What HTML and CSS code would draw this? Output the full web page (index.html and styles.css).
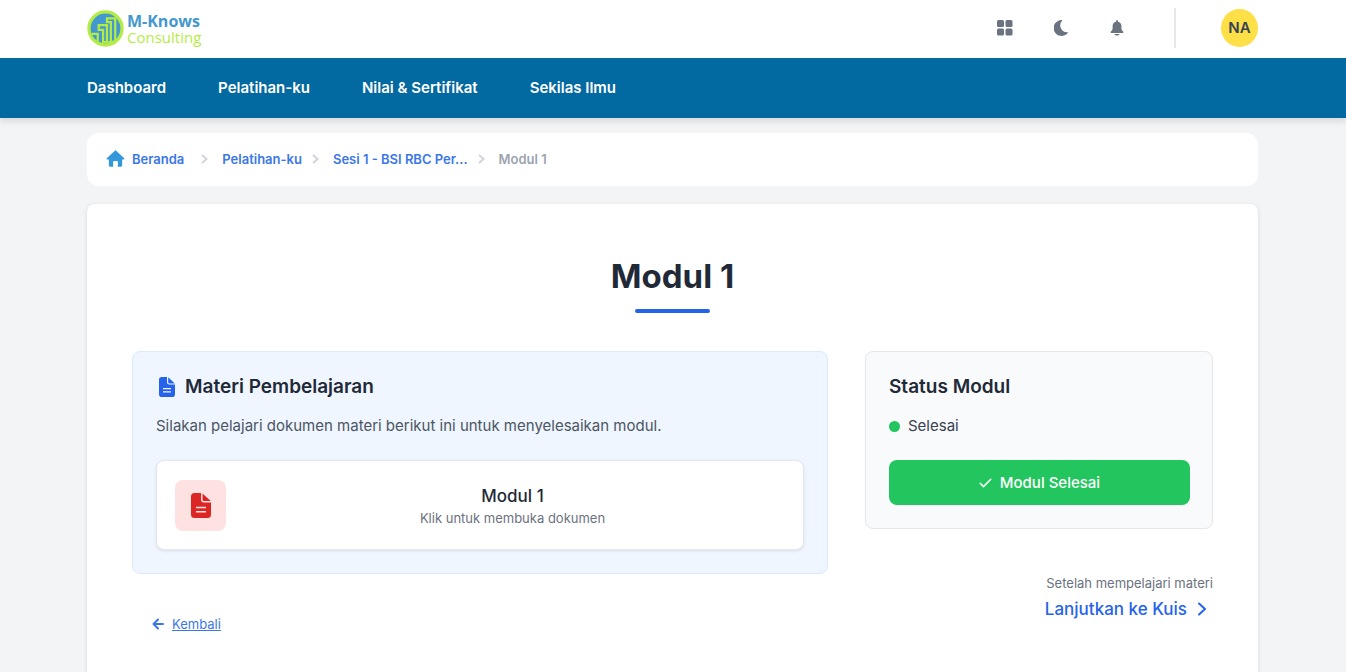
FILE: index.html
```html
<!DOCTYPE html>
<html lang="id">
<head>
<meta charset="utf-8">
<meta name="viewport" content="width=device-width, initial-scale=1">
<title>Modul 1 - M-Knows Consulting</title>
<link rel="stylesheet" href="styles.css">
</head>
<body>
<header class="topbar">
  <div class="container topbar-inner">
    <a class="brand" href="#">
      <svg class="brand-mark" viewBox="0 0 38 38" aria-hidden="true">
        <circle cx="19" cy="19" r="17" fill="#4398cf" stroke="#b4ec45" stroke-width="3.4"/>
        <g fill="none" stroke="#b4ec45" stroke-width="2.300">
          <path d="M5 24.500h6v8M12 20.500v-5h8.500v17.500h-4v-12.500zM20.500 12.500V8.500h8.500v24h-4.500V12.500zM22 33h7"/>
        </g>
      </svg>
      <span class="brand-text"><span class="brand-name">M-Knows</span><span class="brand-sub">Consulting</span></span>
    </a>
    <div class="actions">
      <button class="icon-btn" type="button" aria-label="Menu aplikasi">
        <svg width="16" height="16" viewBox="0 0 16 16" fill="currentColor"><rect width="7" height="7" rx="1.500"/><rect x="8.500" width="7" height="7" rx="1.500"/><rect y="8.500" width="7" height="7" rx="1.500"/><rect x="8.500" y="8.500" width="7" height="7" rx="1.500"/></svg>
      </button>
      <button class="icon-btn" type="button" aria-label="Mode gelap">
        <svg width="14" height="16" viewBox="0 0 14 16" fill="currentColor"><path d="M7.800.100A7.900 7.900 0 1 0 13.700 12.900.4.400 0 0 0 13.300 12.200 6.800 6.800 0 0 1 8.100.800.4.400 0 0 0 7.800.100z"/></svg>
      </button>
      <button class="icon-btn" type="button" aria-label="Notifikasi">
        <svg width="14" height="16" viewBox="0 0 14 16" fill="currentColor"><path d="M7 0a.9.9 0 0 1 .9.900v.800A4.400 4.400 0 0 1 11.400 6v2.200c0 1.500.500 2.400 1.700 3.300.700.600.500 1.400-.500 1.400H1.400c-1 0-1.200-.800-.500-1.400 1.200-.900 1.700-1.800 1.700-3.300V6a4.400 4.400 0 0 1 3.500-4.300V.9A.9.9 0 0 1 7 0zM4.300 13.900h5.400C9 15.100 8.100 15.600 7 15.600S5 15.100 4.300 13.900z"/></svg>
      </button>
      <span class="divider"></span>
      <button class="avatar" type="button">NA</button>
    </div>
  </div>
</header>
<nav class="mainnav" aria-label="Utama">
  <div class="container mainnav-inner">
    <a href="#">Dashboard</a>
    <a href="#">Pelatihan-ku</a>
    <a href="#">Nilai &amp; Sertifikat</a>
    <a href="#">Sekilas Ilmu</a>
  </div>
</nav>
<main class="container page">
  <nav class="crumbs" aria-label="Breadcrumb">
    <a class="crumb-home" href="#">
      <svg width="19" height="19" viewBox="0 0 20 20" fill="#3498db" aria-hidden="true"><path d="M10.700.700a1 1 0 0 0-1.400 0l-8.500 8a.7.7 0 0 0 .5 1.200H3V16.300A1.200 1.200 0 0 0 4.200 17.500H7.500V12.500a1 1 0 0 1 1-1h3a1 1 0 0 1 1 1v5h3.300A1.200 1.200 0 0 0 17 16.300V9.900h1.700a.7.7 0 0 0 .5-1.200z"/></svg>
      <span>Beranda</span>
    </a>
    <svg class="chev chev-first" viewBox="0 0 7 10" aria-hidden="true"><path d="M1 1l4.500 4L1 9"/></svg>
    <a href="#">Pelatihan-ku</a>
    <svg class="chev" viewBox="0 0 7 10" aria-hidden="true"><path d="M1 1l4.500 4L1 9"/></svg>
    <a href="#">Sesi 1 - BSI RBC Per...</a>
    <svg class="chev" viewBox="0 0 7 10" aria-hidden="true"><path d="M1 1l4.500 4L1 9"/></svg>
    <span class="current" aria-current="page">Modul 1</span>
  </nav>
  <article class="card">
    <h1 class="title">Modul 1</h1>
    <div class="columns">
      <div class="col">
        <section class="panel panel-blue">
          <h2 class="panel-title">
            <svg class="doc-icon" viewBox="0 0 16 20" aria-hidden="true"><path fill="currentColor" d="M2.800 0H8v5.200A2.300 2.300 0 0 0 10.300 7.500H16v9.700A2.800 2.800 0 0 1 13.200 20H2.800A2.800 2.800 0 0 1 0 17.200V2.800A2.800 2.800 0 0 1 2.800 0zM9.200.300L15.800 6.400H10.400A1.200 1.200 0 0 1 9.200 5.200zM4 10.900v1.300h8v-1.300zM4 14.300v1.300h8v-1.300z" fill-rule="evenodd"/></svg>
            Materi Pembelajaran
          </h2>
          <p class="lead">Silakan pelajari dokumen materi berikut ini untuk menyelesaikan modul.</p>
          <button class="document" type="button">
            <span class="doc-tile"><svg class="doc-icon-lg" viewBox="0 0 16 20" aria-hidden="true"><path fill="currentColor" d="M2.800 0H8v5.200A2.300 2.300 0 0 0 10.300 7.500H16v9.700A2.800 2.800 0 0 1 13.200 20H2.800A2.800 2.800 0 0 1 0 17.200V2.800A2.800 2.800 0 0 1 2.800 0zM9.200.300L15.800 6.400H10.400A1.200 1.200 0 0 1 9.200 5.200zM4 10.900v1.300h8v-1.300zM4 14.300v1.300h8v-1.300z" fill-rule="evenodd"/></svg></span>
            <span class="doc-text"><span class="doc-name">Modul 1</span><span class="small">Klik untuk membuka dokumen</span></span>
          </button>
        </section>
        <a class="back" href="#">
          <svg width="12" height="12" viewBox="0 0 12 12" aria-hidden="true"><path d="M11 6H1.500M6 1.500L1.500 6 6 10.500" fill="none" stroke="currentColor" stroke-width="2" stroke-linecap="round" stroke-linejoin="round"/></svg>
          <span>Kembali</span>
        </a>
      </div>
      <div class="col">
        <section class="panel panel-gray">
          <h2 class="panel-title">Status Modul</h2>
          <p class="status"><span class="dot"></span>Selesai</p>
          <button class="done" type="button">
            <svg width="13" height="10" viewBox="0 0 13 10" aria-hidden="true"><path d="M1.200 5.300l3.300 3.300L11.800 1.200" fill="none" stroke="currentColor" stroke-width="1.500" stroke-linecap="round" stroke-linejoin="round"/></svg>
            Modul Selesai
          </button>
        </section>
        <div class="next">
          <span class="small">Setelah mempelajari materi</span>
          <a class="next-link" href="#">Lanjutkan ke Kuis
            <svg width="8" height="14" viewBox="0 0 8 14" aria-hidden="true"><path d="M1 1.500L7 7 1 12.500" fill="none" stroke="currentColor" stroke-width="2" stroke-linecap="round" stroke-linejoin="round"/></svg>
          </a>
        </div>
      </div>
    </div>
  </article>
</main>
</body>
</html>
```
FILE: styles.css
```css
* { box-sizing: border-box; }
html { overflow: hidden; }
body {
  margin: 0;
  min-height: 100vh;
  display: flex;
  flex-direction: column;
  background: #f3f4f6;
  color: #1f2937;
  font: 15px/24px Inter, sans-serif;
}
a { color: inherit; text-decoration: none; }
button { font: inherit; color: inherit; border: 0; padding: 0; cursor: pointer; }
h1, h2, p { margin: 0; }
svg { display: block; flex: none; }
.container { width: 100%; padding: 0 88px 0 87px; }

.topbar { background: #fff; }
.topbar-inner { display: flex; align-items: center; justify-content: space-between; height: 58px; padding-bottom: 2px; }
.brand { display: flex; align-items: center; gap: 3px; }
.brand-mark { width: 37px; height: 37px; }
.brand-text { display: flex; flex-direction: column; padding-top: 2px; font-family: "Open Sans", sans-serif; line-height: 16px; }
.brand-name { font-size: 16px; font-weight: 700; color: #4398cf; }
.brand-sub { font-size: 15px; color: #b4ec45; }
.actions { display: flex; align-items: center; }
.icon-btn { display: flex; align-items: center; justify-content: center; width: 36px; height: 36px; margin-right: 20px; background: none; color: #6b7280; }
.divider { width: 2px; height: 40px; margin: 0 45px 0 19px; background: #e5e7eb; }
.avatar { width: 37px; height: 38px; border-radius: 50%; background: #fde047; color: #374151; font-weight: 600; }

.mainnav { background: #0369a1; color: #fff; box-shadow: 0 4px 6px rgba(0, 0, 0, .1); }
.mainnav-inner { display: flex; align-items: center; gap: 52px; height: 60px; font-weight: 600; }

.page { flex: 1; display: flex; flex-direction: column; gap: 18px; padding-top: 15px; }
.crumbs { display: flex; align-items: center; min-height: 53px; padding: 0 19px 1px; border-radius: 12px; background: #fff; color: #3b77e7; font-size: 13px; font-weight: 600; }
.crumb-home { display: flex; align-items: center; gap: 7px; }
.chev { width: 7px; height: 10px; margin: 0 14px 0 10px; fill: none; stroke: #d1d5db; stroke-width: 2; }
.chev-first { margin-left: 17px; }
.current { color: #9ca3af; }

.card { flex: 1; padding: 46px 45px; border-radius: 8px 8px 0 0; background: #fff; box-shadow: 0 1px 4px rgba(0, 0, 0, .12); }
.title { display: flex; flex-direction: column; align-items: center; gap: 7px; font-size: 33px; line-height: 52px; font-weight: 700; }
.title::after { content: ""; width: 75px; height: 4px; border-radius: 2px; background: #2563eb; }
.columns { display: grid; grid-template-columns: 2fr 1fr; gap: 37px; margin-top: 38px; }
.col { display: flex; flex-direction: column; }
.panel { padding: 22px 22px 23px 23px; border: 1px solid; border-radius: 8px; }
.panel-blue { padding-right: 23px; background: #eff6ff; border-color: #dbeafe; }
.panel-gray { background: #f9fafb; border-color: #e5e7eb; }
.panel-title { display: flex; align-items: center; gap: 10px; font-size: 19px; line-height: 26px; font-weight: 600; }
.doc-icon { width: 16px; height: 20px; margin-left: 3px; color: #2563eb; }
.doc-icon-lg { width: 20px; height: 25px; color: #dc2626; }
.lead { margin: 14px 0 22px; color: #4b5563; }
.document { display: flex; align-items: center; width: 100%; padding: 18px; border: 1px solid #e5e7eb; border-radius: 8px; background: #fff; box-shadow: 0 1px 3px rgba(0, 0, 0, .1); min-height: 90px; }
.doc-tile { display: flex; align-items: center; justify-content: center; width: 51px; height: 51px; border-radius: 8px; background: #fee2e2; }
.doc-text { flex: 1; display: flex; flex-direction: column; padding: 2px 0 0 14px; }
.doc-name { font-size: 17px; font-weight: 500; }
.small { font-size: 13px; line-height: 20px; color: #6b7280; }
.back { display: flex; align-items: center; align-self: flex-start; gap: 8px; margin: 40px 0 0 20px; font-size: 13px; line-height: 20px; color: #3b77e7; }
.back span { text-decoration: underline; }
.status { display: flex; align-items: center; gap: 8px; margin: 14px 0 22px; color: #374151; }
.dot { width: 11px; height: 11px; border-radius: 50%; background: #22c55e; }
.done { display: flex; align-items: center; justify-content: center; gap: 8px; width: 100%; height: 45px; border-radius: 8px; background: #22c55e; color: #fff; font-weight: 500; }
.next { display: flex; flex-direction: column; align-items: flex-end; gap: 4px; margin-top: 44px; }
.next-link { display: flex; align-items: center; gap: 11px; padding-right: 7px; font-size: 17px; font-weight: 500; color: #2563eb; }
```
